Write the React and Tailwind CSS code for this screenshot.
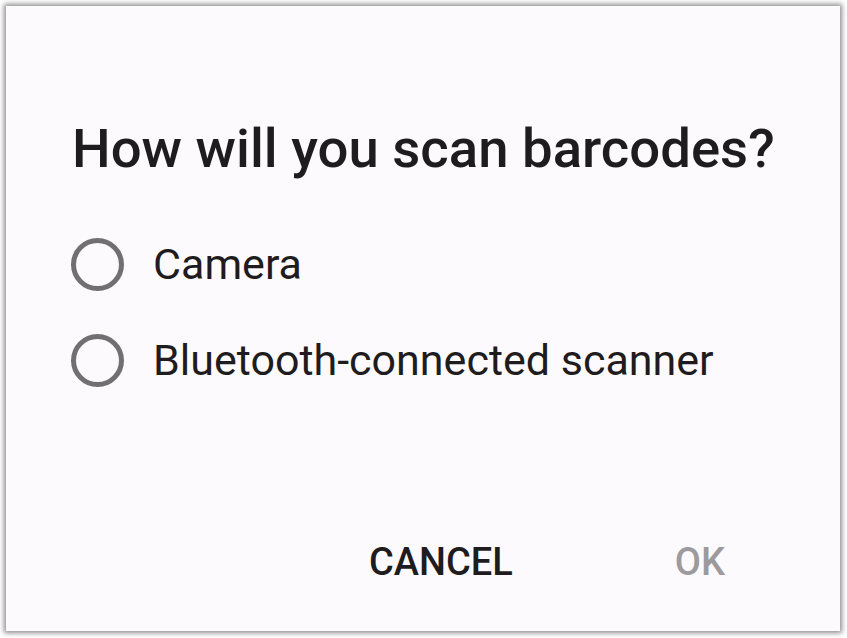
export default function App() {
  const options = ['Camera', 'Bluetooth-connected scanner'];

  return (
    <div className="w-[847px] h-[638px] bg-white pl-[6px] pt-[6px]" style={{ fontFamily: 'Roboto, "Noto Sans", sans-serif' }}>
      <div className="w-[834px] h-[625px] bg-[#fcfafc] shadow-[0_0_5px_2px_rgba(0,0,0,0.45)] flex flex-col">
        <h1 className="mt-[112px] ml-[66px] text-[54.5px] leading-[60px] font-medium text-[#1f1c20]">
          How will you scan barcodes?
        </h1>
        <div className="mt-[38px] flex flex-col">
          {options.map((opt) => (
            <div key={opt} className="flex items-center h-[96px] pl-[65px]">
              <span className="w-[53px] h-[53px] rounded-full border-[5px] border-[#726f73]" />
              <span className="ml-[29px] text-[43px] leading-[50px] text-[#1f1c20]">{opt}</span>
            </div>
          ))}
        </div>
        <div className="mt-auto mb-[40px] flex justify-end items-center pr-[115px] gap-[162px]">
          <button className="text-[38px] font-medium text-[#1f1c20]">CANCEL</button>
          <button className="text-[38px] font-medium text-[#9c9a9c]">OK</button>
        </div>
      </div>
    </div>
  );
}
